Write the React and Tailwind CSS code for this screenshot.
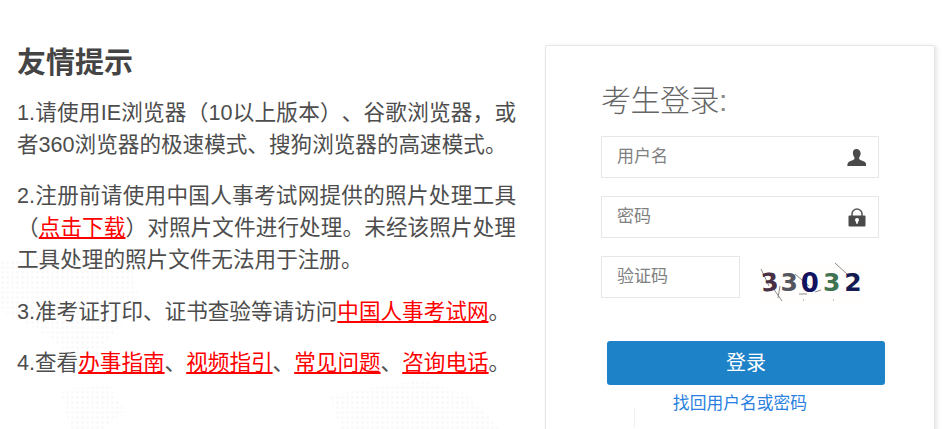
const FONT = '"Liberation Sans","Noto Sans CJK SC",sans-serif';

function Anchor({ children }) {
  return <a className="text-[#f00] underline decoration-[1.5px] underline-offset-[2px]">{children}</a>;
}

function WorldDots() {
  return (
    <svg width="942" height="429" viewBox="0 0 942 429" className="absolute inset-0">
      <defs>
        <pattern id="dots" width="5" height="5" patternUnits="userSpaceOnUse">
          <rect x="1" y="1" width="3" height="3" fill="#fafafa" />
        </pattern>
      </defs>
      <path d="M0 262 L60 250 L130 262 L140 300 L105 345 L80 372 L60 345 L30 325 L0 310z" fill="url(#dots)" />
      <path d="M60 390 L110 385 L125 410 L105 429 L70 429z" fill="url(#dots)" />
      <path d="M330 395 L420 380 L470 395 L500 429 L340 429z" fill="url(#dots)" />
    </svg>
  );
}

function UserIcon() {
  return (
    <svg width="19" height="17" viewBox="0 0 19 17" className="shrink-0">
      <path d="M9.5 0C7 0 5.7 1.9 5.9 4.3c.1 1.5.6 2.9 1.4 3.9.3.4.3 1.3-.2 2-.9 1.2-4.9 1.6-6.1 3.6-.5.9-.7 2-.7 3.2h19c0-1.2-.2-2.3-.7-3.2-1.2-2-5.2-2.4-6.1-3.6-.5-.7-.5-1.6-.2-2 .8-1 1.3-2.4 1.4-3.9C13.3 1.9 12 0 9.5 0z" fill="#4a4a4a" />
    </svg>
  );
}

function LockIcon() {
  return (
    <svg width="18" height="19" viewBox="0 0 18 19" className="shrink-0">
      <path d="M4 8V6a5 5 0 0 1 10 0v2" fill="none" stroke="#5a5a5a" strokeWidth="1.6" />
      <path d="M1.5 7.5h15a1 1 0 0 1 1 1v9a1 1 0 0 1-1 1h-15a1 1 0 0 1-1-1v-9a1 1 0 0 1 1-1z" fill="#4a4a4a" />
      <circle cx="9" cy="12" r="2" fill="#fff" />
      <rect x="8.1" y="12.5" width="1.8" height="3.2" fill="#fff" />
    </svg>
  );
}

function Captcha() {
  return (
    <div className="relative ml-[19px] mt-[6px] h-[40px] w-[104px] shrink-0 overflow-hidden bg-[#fffefc]">
      <svg width="104" height="40" viewBox="0 0 104 40" className="absolute inset-0">
        <path d="M2 7 L10 24 M14 26 L23 39 M21 24 L19 36 M36 12 L50 24 M40 32 L48 32 M56 30 L62 28 M76 1 L88 12 M44 38h1 M74 38h1" stroke="#8a8a8a" strokeWidth="1" fill="none" />
      </svg>
      <div className="absolute left-[2px] top-[5px] flex items-center font-bold leading-[32px] [font-family:'DejaVu_Sans','Liberation_Sans',sans-serif]">
        <span className="mr-[2px] -rotate-6 text-[25px] text-[#4a3044]">3</span>
        <span className="mr-[3px] text-[25px] text-[#55555f]">3</span>
        <span className="mr-[4px] text-[26px] text-[#13125e]">0</span>
        <span className="mr-[4px] text-[25px] text-[#3f7352]">3</span>
        <span className="text-[25px] text-[#141a52]">2</span>
      </div>
    </div>
  );
}

export default function App() {
  return (
    <div className="relative flex h-[429px] w-[942px] overflow-hidden bg-white text-[#4d4d4d] [text-spacing-trim:space-all]" style={{ fontFamily: FONT }}>
      <WorldDots />
      <main className="relative w-[545px] shrink-0 pl-[17px] pt-[44px]">
        <h1 className="mb-[15px] text-[29px] font-bold leading-[38px] text-[#444]">友情提示</h1>
        <div className="w-[499px] text-justify text-[21.6px] leading-[32px] text-[#4d4d4d]">
          <p className="mb-[19px]">1.请使用IE浏览器（10以上版本）、谷歌浏览器，或者360浏览器的极速模式、搜狗浏览器的高速模式。</p>
          <p className="mb-[20px]">2.注册前请使用中国人事考试网提供的照片处理工具（<Anchor>点击下载</Anchor>）对照片文件进行处理。未经该照片处理工具处理的照片文件无法用于注册。</p>
          <p className="mb-[19px]">3.准考证打印、证书查验等请访问<Anchor>中国人事考试网</Anchor>。</p>
          <p>4.查看<Anchor>办事指南</Anchor>、<Anchor>视频指引</Anchor>、<Anchor>常见问题</Anchor>、<Anchor>咨询电话</Anchor>。</p>
        </div>
      </main>
      <section className="relative mt-[45px] h-[420px] w-[390px] shrink-0 rounded-t-[2px] border border-[#e6e6e6] bg-white pl-[55px] pt-[33px] shadow-[2px_1px_4px_rgba(0,0,0,0.10)]">
        <h2 className="mb-[13px] text-[30px] font-light leading-[44px] tracking-[-0.5px] text-[#666]">考生登录<span className="text-[#888]">:</span></h2>
        <div className="mb-[18px] flex h-[42px] w-[278px] items-center justify-between border border-[#e6e6e6] pl-[15px] pr-[12px] text-[17px] text-[#808080]">
          <span>用户名</span>
          <UserIcon />
        </div>
        <div className="mb-[18px] flex h-[42px] w-[278px] items-center justify-between border border-[#e6e6e6] pl-[15px] pr-[12px] text-[17px] text-[#808080]">
          <span>密码</span>
          <LockIcon />
        </div>
        <div className="flex">
          <div className="flex h-[42px] w-[139px] shrink-0 items-center border border-[#e6e6e6] pl-[15px] text-[17px] text-[#808080]">验证码</div>
          <Captcha />
        </div>
        <button className="ml-[6px] mt-[39px] block h-[44px] w-[278px] rounded-[3px] bg-[#1e82c8] text-[20px] text-white">登录</button>
        <a className="ml-[6px] mt-[7px] block w-[266px] text-center text-[16.8px] leading-[24px] text-[#2a7fe0]">找回用户名或密码</a>
        <div className="absolute left-[88px] top-[362px] h-[20px] w-px bg-[#f0f0f0]" />
      </section>
    </div>
  );
}
